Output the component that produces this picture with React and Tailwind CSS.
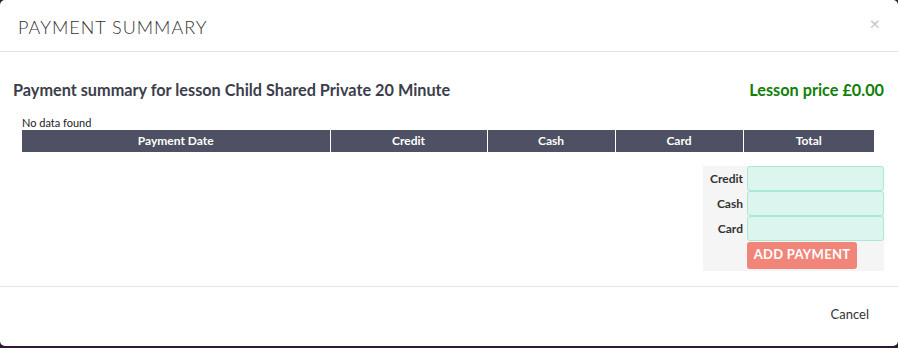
import React from 'react';

const columns = ['Payment Date', 'Credit', 'Cash', 'Card', 'Total'];
const widths = ['w-[308px]', 'w-[157px]', 'w-[128px]', 'w-[128px]', 'w-[131px]'];

function Field({ label }) {
  return (
    <div className="flex items-center h-[25px]">
      <label className="w-[40px] text-right pr-[4px] text-[12px] font-bold text-[#333]">{label}</label>
      <input
        type="text"
        className="w-[137px] h-[25px] rounded-[3px] border border-[#a7e9d3] bg-[#dcf5ee] outline-none px-2"
      />
    </div>
  );
}

export default function App() {
  return (
    <div className="w-[898px] h-[348px] bg-[#2e1a36] font-['Lato',sans-serif]">
      <div className="h-[346px] bg-white rounded-[5px] flex flex-col">
        {/* Header */}
        <div className="h-[52px] border-b border-[#e5e5e5] flex items-center justify-between pl-[18px] pr-[18px]">
          <h4 className="text-[18px] font-light tracking-[1px] text-[#333] leading-none pt-[2px]">PAYMENT SUMMARY</h4>
          <button className="text-[#c4c4c4] text-[18px] leading-none -mt-[5px]">×</button>
        </div>

        {/* Body */}
        <div className="flex-1 px-[13px] pt-[26px]">
          <div className="flex items-center justify-between pr-[1px]">
            <h3 className="text-[16.25px] font-bold text-[#3c3e4c]">Payment summary for lesson Child Shared Private 20 Minute</h3>
            <h3 className="text-[16.25px] font-bold text-[#118009]">Lesson price £0.00</h3>
          </div>

          <div className="pl-[9px] mt-[14px] text-[11px] text-[#222] leading-[14px]">No data found</div>
          <div className="pl-[9px]">
            <table className="border-collapse">
              <thead>
                <tr className="bg-[#4e5064] h-[22px]">
                  {columns.map((c, i) => (
                    <th
                      key={c}
                      className={`${widths[i]} p-0 text-[12px] font-bold text-white text-center ${i > 0 ? 'border-l border-white' : ''}`}
                    >
                      {c}
                    </th>
                  ))}
                </tr>
              </thead>
            </table>
          </div>

          <div className="flex justify-end mt-[14px] mr-[1px]">
            <div className="w-[181px] h-[105px] bg-[#f5f5f5] pl-[4px]">
              <Field label="Credit" />
              <Field label="Cash" />
              <Field label="Card" />
              <div className="pl-[40px]">
                <button className="w-[110px] h-[27px] rounded-[3px] bg-[#f2857a] text-white text-[13px] font-bold tracking-[0.3px]">
                  ADD PAYMENT
                </button>
              </div>
            </div>
          </div>
        </div>

        {/* Footer */}
        <div className="h-[60px] border-t border-[#e5e5e5] flex items-center justify-end pr-[29px] pb-[4px]">
          <button className="text-[13px] text-[#333]">Cancel</button>
        </div>
      </div>
    </div>
  );
}
